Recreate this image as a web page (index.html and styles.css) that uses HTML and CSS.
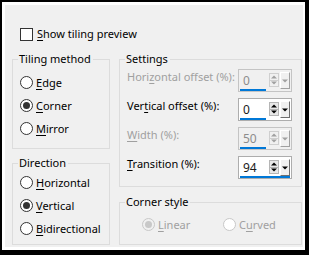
FILE: index.html
```html
<!DOCTYPE html>
<html>
<head>
<meta charset="utf-8">
<link rel="stylesheet" href="styles.css">
</head>
<body>
<div class="window">
  <div class="panel">
    <label class="check-row"><span class="checkbox"></span><span><u>S</u>how tiling preview</span></label>
    <div class="columns">
      <div class="col col-left">
        <div class="group g-tiling">
          <div class="legend">Tiling method</div>
          <div class="radios">
            <div class="radio-row"><span class="radio"></span><span><u>E</u>dge</span></div>
            <div class="radio-row"><span class="radio checked"></span><span><u>C</u>orner</span></div>
            <div class="radio-row"><span class="radio"></span><span><u>M</u>irror</span></div>
          </div>
        </div>
        <div class="group g-direction">
          <div class="legend">Direction</div>
          <div class="radios">
            <div class="radio-row"><span class="radio"></span><span><u>H</u>orizontal</span></div>
            <div class="radio-row"><span class="radio checked"></span><span><u>V</u>ertical</span></div>
            <div class="radio-row"><span class="radio"></span><span><u>B</u>idirectional</span></div>
          </div>
        </div>
      </div>
      <div class="col col-right">
        <div class="group g-settings">
          <div class="legend">Settings</div>
          <div class="fields">
            <div class="field-row disabled">
              <span class="label">Hori<u>z</u>ontal offset (%):</span>
              <div class="spin">
                <div class="spin-top"><span class="value">0</span><span class="arrows"><span class="up"></span><span class="down"></span></span><span class="drop"></span></div>
                <div class="bar"></div>
              </div>
            </div>
            <div class="field-row">
              <span class="label">Ver<u>t</u>ical offset (%):</span>
              <div class="spin">
                <div class="spin-top"><span class="value">0</span><span class="arrows"><span class="up"></span><span class="down"></span></span><span class="drop"></span></div>
                <div class="bar"></div>
              </div>
            </div>
            <div class="field-row disabled">
              <span class="label"><u>W</u>idth (%):</span>
              <div class="spin">
                <div class="spin-top"><span class="value">50</span><span class="arrows"><span class="up"></span><span class="down"></span></span><span class="drop"></span></div>
                <div class="bar"></div>
              </div>
            </div>
            <div class="field-row">
              <span class="label"><u>T</u>ransition (%):</span>
              <div class="spin">
                <div class="spin-top"><span class="value">94</span><span class="arrows"><span class="up"></span><span class="down"></span></span><span class="drop"></span></div>
                <div class="bar full"></div>
              </div>
            </div>
          </div>
        </div>
        <div class="group g-corner">
          <div class="legend">Corner style</div>
          <div class="corner-row disabled">
            <div class="radio-row item-linear"><span class="radio checked"></span><span><u>L</u>inear</span></div>
            <div class="radio-row"><span class="radio"></span><span>C<u>u</u>rved</span></div>
          </div>
        </div>
      </div>
    </div>
  </div>
</div>
</body>
</html>
```

FILE: styles.css
```css
* { box-sizing: border-box; }
html, body { margin: 0; padding: 0; background: #000; }
body {
  font-family: "Noto Sans", "Open Sans", sans-serif;
  font-size: 11px;
  line-height: 16px;
  color: #000;
  white-space: nowrap;
}
u { text-decoration: underline; text-underline-offset: 2px; }

.window {
  width: 309px;
  height: 255px;
  border-style: solid;
  border-color: #000;
  border-width: 2px 4px 5px 2px;
  background: #fff;
  padding: 3px 2px 3px 3px;
}
.panel {
  height: 100%;
  background: #f0f0f0;
  padding: 0 1px 0 7px;
  display: flex;
  flex-direction: column;
}

.check-row {
  display: flex;
  align-items: center;
  gap: 4px;
  margin: 21px 0 0 8px;
  height: 16px;
}
.checkbox {
  width: 13px;
  height: 13px;
  border: 1px solid #333;
  background: #fff;
}

.columns {
  display: flex;
  gap: 9px;
  margin-top: 17px;
}
.col { display: flex; flex-direction: column; }
.col-left { width: 98px; gap: 14px; }
.col-right { width: 183px; gap: 15px; }

.group {
  border: 1px solid #dcdcdc;
  display: flex;
  flex-direction: column;
}
.legend {
  align-self: flex-start;
  margin: -9px 0 0 5px;
  padding: 0 2px 0 1px;
  background: #f0f0f0;
  line-height: 16px;
}
.g-tiling { height: 90px; }
.g-direction { height: 82px; }
.g-settings { height: 128px; }
.g-corner { height: 43px; }

.radios { display: flex; flex-direction: column; padding-left: 7px; }
.g-tiling .radios { margin-top: 4px; }
.g-direction .radios { margin-top: 0; }
.radio-row {
  display: flex;
  align-items: center;
  gap: 3px;
  height: 23px;
}
.radio {
  width: 13px;
  height: 13px;
  border-radius: 50%;
  border: 1px solid #333;
  background: #fff;
  display: flex;
  align-items: center;
  justify-content: center;
  flex: none;
}
.radio.checked::after {
  content: "";
  width: 7px;
  height: 7px;
  border-radius: 50%;
  background: #333;
}

.fields { display: flex; flex-direction: column; padding-left: 7px; margin-top: 2px; gap: 6px; }
.field-row {
  display: flex;
  align-items: flex-start;
  justify-content: space-between;
  height: 23px;
  padding-right: 9px;
}
.label { line-height: 16px; }
.disabled .label, .disabled > .radio-row, .corner-row.disabled { color: #a0a0a0; }

.spin {
  width: 54px;
  height: 23px;
  border: 1px solid #adadad;
  background: #fff;
  display: flex;
  flex-direction: column;
  padding: 1px 1px 0 1px;
}
.disabled .spin { background: #f0f0f0; border-color: #c4c4c4; }
.spin-top { display: flex; height: 18px; }
.value {
  width: 30px;
  padding-left: 3px;
  line-height: 19px;
  font-size: 12px;
  color: #1a1a1a;
}
.disabled .value { color: #8c8c8c; }
.arrows {
  display: flex;
  flex-direction: column;
  width: 11px;
  margin-top: 2px;
  height: 14px;
}
.arrows span {
  flex: 1;
  border: 1px solid #b5b5b5;
  background: #e8e8e8;
  position: relative;
}
.arrows .up { border-bottom: none; }
.arrows .up::after, .arrows .down::after, .drop::after {
  content: "";
  position: absolute;
  left: 50%;
  top: 50%;
  width: 0;
  height: 0;
  border-left: 3px solid transparent;
  border-right: 3px solid transparent;
  transform: translate(-50%, -50%);
}
.arrows .up::after { border-bottom: 3px solid #000; }
.arrows .down::after, .drop::after { border-top: 3px solid #000; }
.drop {
  position: relative;
  width: 10px;
  height: 17px;
  margin: 1px 0 0 1px;
  background: #f0f0f0;
  border-top: 1px solid #fff;
  border-left: 1px solid #fff;
  border-right: 1px solid #6e6e6e;
  border-bottom: 1px solid #6e6e6e;
}
.disabled .arrows span { background: #f0f0f0; border-color: #cfcfcf; }
.disabled .arrows .up::after { border-bottom-color: #a0a0a0; }
.disabled .arrows .down::after, .disabled .drop::after { border-top-color: #a0a0a0; }
.disabled .drop { border-right-color: #a0a0a0; border-bottom-color: #a0a0a0; }

.bar {
  height: 3px;
  width: 26px;
  background: #0078d7;
}
.bar.full { width: 50px; }

.corner-row {
  display: flex;
  padding-left: 22px;
  margin-top: 3px;
}
.item-linear { width: 81px; }
.corner-row .radio { border-color: #c8c8c8; }
.corner-row .radio.checked { background: #f0f0f0; }
.corner-row .radio.checked::after { background: #c8c8c8; }
```
